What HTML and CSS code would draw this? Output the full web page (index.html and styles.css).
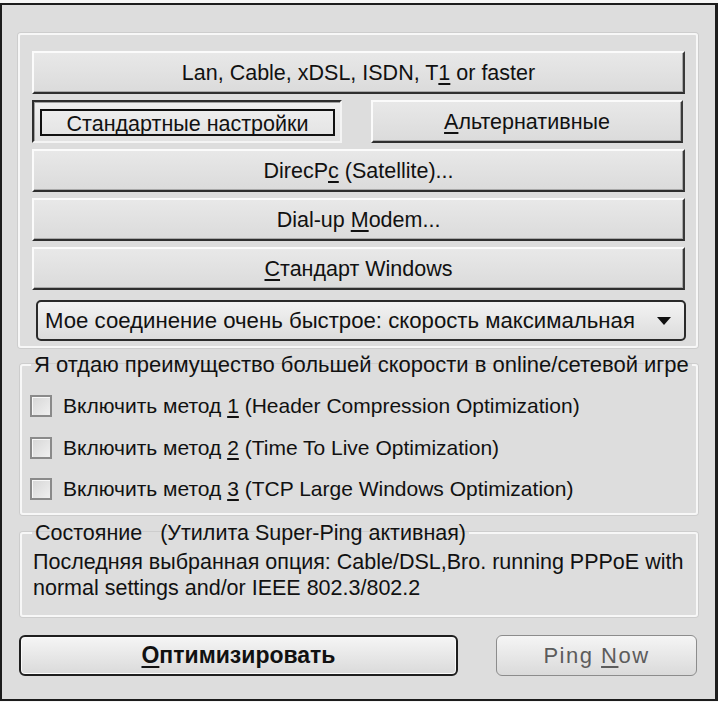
FILE: index.html
```html
<!DOCTYPE html>
<html lang="ru">
<head>
<meta charset="utf-8">
<title>Super-Ping</title>
<link rel="stylesheet" href="styles.css">
</head>
<body>
<div class="window">
  <div class="group group-conn">
    <button class="btn"><span>Lan, Cable, xDSL, ISDN, T<u>1</u> or faster</span></button>
    <div class="btn-row">
      <button class="btn btn-pressed"><span class="focus">Стандартные настройки</span></button>
      <button class="btn"><span><u>А</u>льтернативные</span></button>
    </div>
    <button class="btn"><span>DirecP<u>c</u> (Satellite)...</span></button>
    <button class="btn"><span>Dial-up <u>M</u>odem...</span></button>
    <button class="btn"><span><u>С</u>тандарт Windows</span></button>
    <div class="select">
      <span class="select-text">Мое соединение очень быстрое: скорость максимальная</span>
      <svg class="select-arrow" width="16" height="10" viewBox="0 0 16 10"><path d="M1 1 L15 1 L8 9 Z" fill="#111"/></svg>
    </div>
  </div>

  <fieldset class="group group-game">
    <legend>Я отдаю преимущество большей скорости в online/сетевой игре</legend>
    <label class="check"><span class="box"></span><span>Включить метод <u>1</u> (Header Compression Optimization)</span></label>
    <label class="check"><span class="box"></span><span>Включить метод <u>2</u> (Time To Live Optimization)</span></label>
    <label class="check"><span class="box"></span><span>Включить метод <u>3</u> (TCP Large Windows Optimization)</span></label>
  </fieldset>

  <fieldset class="group group-status">
    <legend>Состояние &nbsp; (Утилита Super-Ping активная)</legend>
    <p class="status-text">Последняя выбранная опция: Cable/DSL,Bro. running PPPoE with<br>normal settings and/or IEEE 802.3/802.2</p>
  </fieldset>

  <div class="actions">
    <button class="rbtn rbtn-primary"><span><u>О</u>птимизировать</span></button>
    <button class="rbtn rbtn-disabled"><span>Ping <u>N</u>ow</span></button>
  </div>
</div>
</body>
</html>
```

FILE: styles.css
```css
* { box-sizing: border-box; }

html, body {
  margin: 0;
  padding: 0;
  background: #f6f6f6;
}

body {
  font-family: "Liberation Sans", Arial, sans-serif;
  color: #111;
}

.window {
  margin-top: 3px;
  width: 718px;
  height: 698px;
  border: 2px solid #1c1c1c;
  border-right-width: 3px;
  background: #dddddd;
  padding: 28px 0 0 16px;
  display: flex;
  flex-direction: column;
}

.group {
  border: 2px solid #f7f7f7;
  border-radius: 3px;
  box-shadow: 0 0 0 1px #cdcdcd;
  margin: 0;
  min-width: 0;
}

.group-conn {
  width: 680px;
  padding: 16px 11px 5px 12px;
  display: flex;
  flex-direction: column;
  gap: 6px;
}

.btn {
  height: 43px;
  width: 100%;
  font-family: "Liberation Sans", Arial, sans-serif;
  font-size: 21.5px;
  color: #111;
  background: linear-gradient(#e8e8e8, #dbdbdb);
  border-style: solid;
  border-width: 2px;
  border-color: #fbfbfb #3a3a3a #2e2e2e #fbfbfb;
  box-shadow: inset -1px -1px 0 #a8a8a8;
  padding: 2px 0 0;
  display: flex;
  align-items: center;
  justify-content: center;
  white-space: nowrap;
}

.btn u { text-underline-offset: 3px; }

.btn-row {
  display: flex;
  gap: 29px;
  padding-right: 2px;
}

.btn-row .btn { height: 43px; }
.btn-row .btn:first-child { width: 310px; flex: none; }
.btn-row .btn:last-child { flex: 1; }

.btn-pressed {
  border-color: #2e2e2e #f4f4f4 #f4f4f4 #2e2e2e;
  box-shadow: inset 1px 1px 0 #a0a0a0;
  background: linear-gradient(#f0f0f0, #e2e2e2);
  padding: 7px 5px 5px 6px;
}

.focus {
  flex: 1;
  align-self: stretch;
  border: 2px solid #111;
  display: flex;
  align-items: center;
  justify-content: center;
  padding-top: 3px;
  text-decoration: underline;
  text-underline-offset: 3px;
}

.select {
  margin: 4px -1px 0 4px;
  height: 41px;
  border: 2px solid #2a2a2a;
  border-radius: 5px;
  background: linear-gradient(#f3f3f3, #dcdcdc);
  display: flex;
  align-items: center;
  padding: 1px 12px 0 7px;
  font-size: 22.2px;
}

.select-text { flex: 1; white-space: nowrap; }
.select-arrow { flex: none; }

fieldset.group {
  width: 678px;
  margin-left: 2px;
}

.group legend {
  font-size: 22px;
  line-height: 24px;
  padding: 0 3px;
  white-space: nowrap;
}

.group-game {
  margin-top: 5px;
  padding: 14px 8px 9px 8px;
  display: flex;
  flex-direction: column;
  gap: 11.5px;
}

.group-game legend { margin-left: 1px; }

.check {
  height: 30px;
  display: flex;
  align-items: center;
  gap: 11px;
  font-size: 21px;
}

.check u { text-underline-offset: 3px; }

.box {
  width: 22px;
  height: 22px;
  flex: none;
  border: 2px solid #8a8a8a;
  box-shadow: inset 1px 1px 0 #f8f8f8;
  background: linear-gradient(135deg, #d6d6d6, #f0f0f0);
}

.group-status {
  margin-top: 6px;
  padding: 4px 10px 14px 11px;
}

.group-status legend { margin-left: -1px; font-size: 21.5px; }

.status-text {
  margin: 0;
  font-size: 21.5px;
  line-height: 26px;
  white-space: nowrap;
}

.actions {
  margin-top: 18px;
  display: flex;
  gap: 38px;
  margin-left: 1px;
}

.rbtn {
  height: 41px;
  border-radius: 6px;
  font-family: "Liberation Sans", Arial, sans-serif;
  font-size: 21px;
  background: linear-gradient(#f5f5f5, #dadada);
  padding: 0;
  white-space: nowrap;
}

.rbtn u { text-underline-offset: 3px; }

.rbtn-primary {
  width: 439px;
  border: 2px solid #1e1e1e;
  box-shadow: inset 0 0 0 1px #fafafa;
  font-weight: bold;
  font-size: 23px;
  color: #111;
}

.rbtn-disabled {
  width: 201px;
  border: 1px solid #8c8c8c;
  color: #5c5c5c;
  font-size: 22px;
  letter-spacing: 1.5px;
}
```
